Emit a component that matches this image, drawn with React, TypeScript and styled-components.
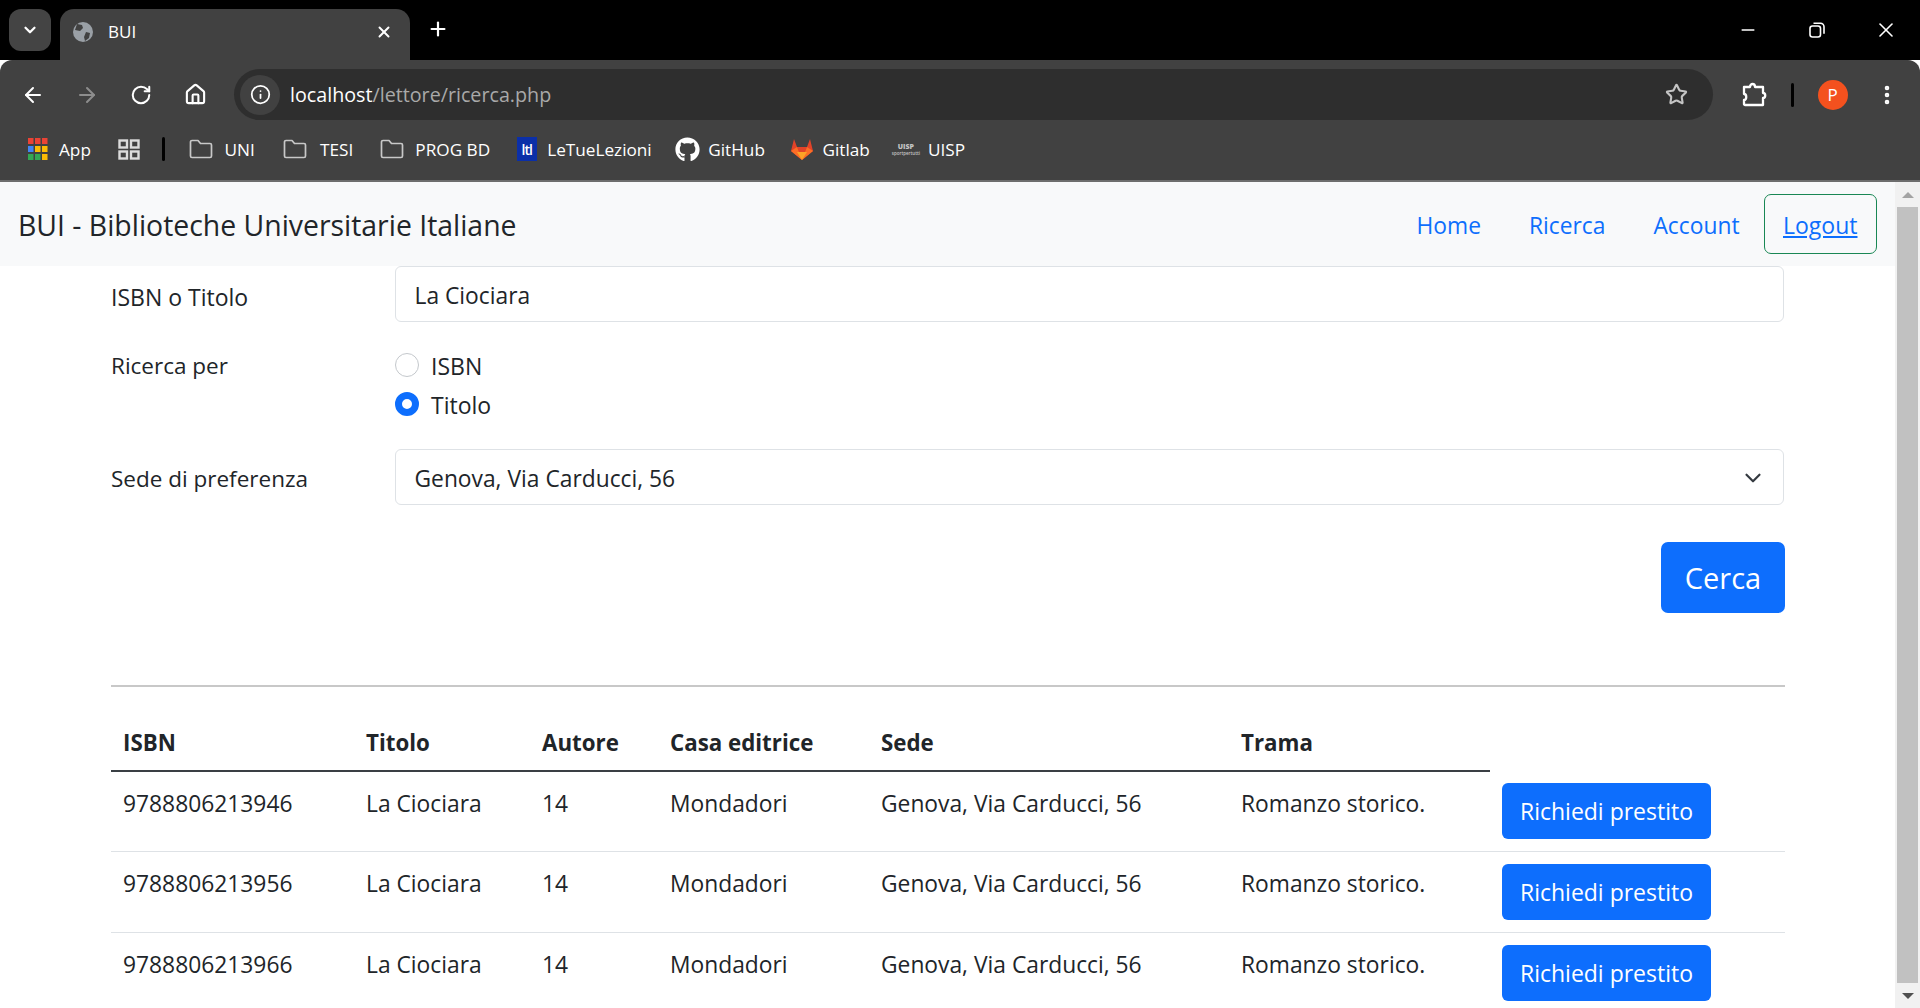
import React from "react";
import styled, { createGlobalStyle } from "styled-components";
import { ArrowLeft, ArrowRight, RotateCw, Home as HomeIcon, Info, Star, MoreVertical, X, Plus, ChevronDown, Minus } from "lucide-react";
import { FaGithub } from "react-icons/fa";

const Global = createGlobalStyle`
  html, body { margin: 0; padding: 0; height: 1008px; overflow: hidden; background: #fff; }
  * { box-sizing: border-box; }
  body { font-family: "Open Sans", "Noto Sans", sans-serif; color: #212529; }
`;

const Shell = styled.div`width: 1920px; height: 1008px; display: flex; flex-direction: column; overflow: hidden;`;

/* ---------- browser chrome ---------- */
const TabStrip = styled.div`height: 60px; background: #000; display: flex; align-items: flex-start; padding: 9px 0 0 9px; flex: none;`;
const TabMenu = styled.div`width: 42px; height: 42px; border-radius: 12px; background: #444; color: #fff; display: flex; align-items: center; justify-content: center;`;
const Tab = styled.div`width: 350px; height: 51px; margin-left: 9px; background: #414141; border-radius: 14px 14px 0 0; display: flex; align-items: center; padding: 0 17px 6px 12px; color: #fff; font-size: 17px;`;
const TabTitle = styled.span`margin-left: 14px; flex: 1;`;
const NewTab = styled.div`margin: 9px 0 0 17px; color: #fff; display: flex;`;
const WindowButtons = styled.div`margin-left: auto; display: flex; align-items: center; height: 42px;`;
const WindowButton = styled.div<{ $w: number }>`width: ${p => p.$w}px; height: 42px; color: #fff; display: flex; align-items: center; justify-content: center;`;

const Toolbar = styled.div`height: 60px; background: #414141; border-radius: 12px 12px 0 0; display: flex; align-items: center; padding: 9px 0 0 1px; flex: none;`;
const NavIcon = styled.div<{ $w: number; $dim?: boolean; $ml?: number }>`width: ${p => p.$w}px; margin-left: ${p => p.$ml ?? 0}px; color: ${p => (p.$dim ? "#8d8d8d" : "#fff")}; display: flex; justify-content: center; flex: none;`;
const Omnibox = styled.div`margin-left: 17px; width: 1478.5px; height: 51px; border-radius: 26px; background: #2e2e2e; display: flex; align-items: center; padding: 0 25px 0 6px; flex: none;`;
const InfoChip = styled.div`width: 40px; height: 40px; border-radius: 50%; background: #414141; color: #fff; display: flex; align-items: center; justify-content: center;`;
const Url = styled.div`margin-left: 10px; font-size: 19.7px; color: #a9a9a9; flex: 1;`;
const UrlHost = styled.span`color: #fff;`;
const ToolbarDivider = styled.div`width: 3px; height: 24px; background: #000; border-radius: 2px; margin: 0 22px 0 16px; flex: none;`;
const Avatar = styled.div`width: 30px; height: 30px; border-radius: 50%; background: #f4511e; color: #fff; font-size: 17px; display: flex; align-items: center; justify-content: center; flex: none; margin-left: 2px;`;

const Bookmarks = styled.div`height: 62px; background: #414141; display: flex; align-items: center; padding: 0 0 2px 28px; flex: none; color: #fff; font-size: 17.2px; border-bottom: 2px solid #6d6d6d;`;
const Bookmark = styled.div<{ $gap?: number; $ml?: number }>`display: flex; align-items: center; gap: ${p => p.$gap ?? 11}px; margin-left: ${p => p.$ml ?? 0}px; flex: none;`;
const BookmarkDivider = styled.div`width: 3px; height: 24px; background: #000; border-radius: 2px; margin-left: 22px; flex: none;`;
const LtlIcon = styled.div`width: 20px; height: 24px; background: #0b2fa8; color: #fff; font-size: 14px; font-weight: 600; display: flex; align-items: center; justify-content: center; letter-spacing: -1px;`;
const UispIcon = styled.div`width: 24px; color: #c4c4c4; font-size: 7px; font-weight: 800; line-height: 7px; text-align: center; display: flex; flex-direction: column; align-items: center;`;
const UispTag = styled.span`font-size: 4.5px; font-weight: 600; line-height: 6px; white-space: nowrap;`;

/* ---------- page ---------- */
const Viewport = styled.div`flex: 1; display: flex; min-height: 0;`;
const Page = styled.div`flex: 1; min-width: 0; overflow: hidden; background: #fff;`;
const Scrollbar = styled.div`width: 25px; flex: none; background: #f1f1f1; display: flex; flex-direction: column; align-items: center;`;
const ScrollArrow = styled.div<{ $down?: boolean }>`height: 25px; flex: none; display: flex; align-items: center; justify-content: center;
  &::before { content: ""; border-left: 6px solid transparent; border-right: 6px solid transparent; ${p => (p.$down ? "border-top: 6px solid #505050;" : "border-bottom: 6px solid #a3a3a3;")} }`;
const ScrollThumb = styled.div`width: 21px; flex: 1; background: #c1c1c1;`;

const Navbar = styled.nav`height: 84px; background: #f8f9fa; display: flex; align-items: center; padding: 2px 18px 0;`;
const Brand = styled.div`font-size: 28.4px; color: #212529;`;
const NavLinks = styled.div`margin-left: auto; display: flex; align-items: center; margin-top: -2px;`;
const NavLink = styled.a`font-size: 22.8px; color: #0d6efd; padding: 3px 24px 0;`;
const LogoutLink = styled.a`font-size: 23px; color: #0d6efd; text-decoration: underline; border: 1.5px solid #198754; border-radius: 7px; height: 60px; padding: 2px 18.5px 0; display: flex; align-items: center;`;

const Form = styled.div`padding: 0 110px 0 111px;`;
const Row = styled.div<{ $mt?: number }>`display: grid; grid-template-columns: 284px 1fr; padding-right: 1px; margin-top: ${p => p.$mt ?? 0}px;`;
const Label = styled.div<{ $pt: number; $size?: number }>`font-size: ${p => p.$size ?? 22.5}px; padding-top: ${p => p.$pt}px; line-height: 34px;`;
const Control = styled.div`height: 56px; border: 1.5px solid #dee2e6; border-radius: 6px; padding: 2px 17px 0 18.5px; font-size: 22.8px; display: flex; align-items: center; justify-content: space-between; background: #fff;`;
const RadioGroup = styled.div`display: flex; flex-direction: column; gap: 5px;`;
const RadioRow = styled.div`display: flex; align-items: center; gap: 12px; font-size: 23px; height: 34px;`;
const RadioText = styled.span`padding-top: 2px;`;
const Radio = styled.span<{ $on?: boolean }>`width: 24px; height: 24px; border-radius: 50%; flex: none; ${p => (p.$on ? "background: #fff; border: 7px solid #0d6efd;" : "border: 1.5px solid #c4c8cc; background: #fff;")}`;
const Actions = styled.div`display: flex; justify-content: flex-end; margin-top: 37px;`;
const SearchButton = styled.button`width: 124px; height: 71px; border: 0; border-radius: 7px; background: #0d6efd; color: #fff; font: inherit; font-size: 29px;`;
const Rule = styled.hr`margin: 72px 0 0; border: 0; border-top: 2px solid #c8c8c8;`;

const Table = styled.table`width: 100%; border-collapse: collapse; table-layout: fixed; margin-top: 10.5px; font-size: 22.8px;`;
const HeadCell = styled.th<{ $plain?: boolean }>`text-align: left; height: 73px; padding: 0 12px 12px; vertical-align: bottom; font-weight: 700; font-size: 22.3px; ${p => (p.$plain ? "" : "border-bottom: 2px solid #3a3f44;")}`;
const BodyRow = styled.tr`height: 81px; border-bottom: 1px solid #dee2e6;`;
const Cell = styled.td`padding: 15px 12px 0; vertical-align: top; line-height: 34px;`;
const ActionCell = styled.td`padding: 12px 12px 0; vertical-align: top;`;
const RequestButton = styled.button`width: 209px; height: 56px; border: 0; border-radius: 6px; background: #0d6efd; color: #fff; font: inherit; font-size: 23px; display: block; padding: 0;`;
const Col = styled.col<{ $w: number }>`width: ${p => p.$w}px;`;

const columns = [243, 176, 128, 211, 360, 261, 295];
const rows = ["9788806213946", "9788806213956", "9788806213966"];

const Globe = () => (
  <svg width="22" height="22" viewBox="0 0 22 22"><circle cx="11" cy="11" r="10" fill="#9aa0a6" /><path d="M5 3l5 1 1 3-3 3-5-1zM14 11l4 1-1 5-4 3-1-4z" fill="#414141" /></svg>
);
const AppsGrid = () => (
  <svg width="20" height="22" viewBox="0 0 20 22">
    {["#ea4335", "#ea4335", "#ea4335", "#4285f4", "#fbbc04", "#fbbc04", "#34a853", "#34a853", "#fbbc04"].map((c, i) => (
      <rect key={i} x={(i % 3) * 7} y={Math.floor(i / 3) * 8} width="5.5" height="6" fill={c} />
    ))}
  </svg>
);
const TileIcon = () => (
  <svg width="22" height="21" viewBox="0 0 22 21" fill="none" stroke="#dcdcdc" strokeWidth="2.4"><rect x="1.5" y="1.5" width="7.5" height="7" /><rect x="13" y="1.5" width="7.5" height="7" /><rect x="1.5" y="12.5" width="7.5" height="7" /><rect x="13" y="12.5" width="7.5" height="7" /></svg>
);
const Puzzle = () => (
  <svg width="26" height="26" viewBox="0 0 26 26" fill="none" stroke="#fff" strokeWidth="2.3" strokeLinejoin="round"><path d="M3 5h6c0-4 5-4 5 0h8v6c3 0 3 5 0 5v7H4c-1 0-1-1-1-1v-4c3 0 3-6 0-6z" /></svg>
);
const Restore = () => (
  <svg width="16" height="16" viewBox="0 0 16 16" fill="none" stroke="#fff" strokeWidth="1.6"><rect x="1" y="4" width="10.5" height="11" rx="2.5" /><path d="M4.5 1.2h7a3.5 3.5 0 0 1 3.5 3.5v7" /></svg>
);
const GitlabLogo = () => (
  <svg width="24" height="24" viewBox="0 0 24 24"><path d="M12 23L1 14l3-12 3 8h10l3-8 3 12z" fill="#e24329" /><path d="M12 23L1 14l6-4z" fill="#fc6d26" /><path d="M12 23l11-9-6-4z" fill="#fc6d26" /><path d="M12 23l-5-8h10z" fill="#fca326" /></svg>
);
const FolderIcon = () => (
  <svg width="24" height="20" viewBox="0 0 24 20" fill="none" stroke="#c8c8c8" strokeWidth="1.7" strokeLinejoin="round"><path d="M1.5 3a1.5 1.5 0 0 1 1.5-1.5h6l2.5 3H21a1.5 1.5 0 0 1 1.5 1.5v11a1.5 1.5 0 0 1-1.5 1.5H3A1.5 1.5 0 0 1 1.5 17z" /></svg>
);

export default function App() {
  return (
    <Shell>
      <Global />
      <TabStrip>
        <TabMenu><ChevronDown size={18} strokeWidth={3} /></TabMenu>
        <Tab>
          <Globe />
          <TabTitle>BUI</TabTitle>
          <X size={18} strokeWidth={2.6} />
        </Tab>
        <NewTab><Plus size={22} strokeWidth={2.4} /></NewTab>
        <WindowButtons>
          <WindowButton $w={68}><Minus size={20} strokeWidth={1.8} /></WindowButton>
          <WindowButton $w={70}><Restore /></WindowButton>
          <WindowButton $w={68}><X size={24} strokeWidth={1.6} /></WindowButton>
        </WindowButtons>
      </TabStrip>
      <Toolbar>
        <NavIcon $w={64}><ArrowLeft size={24} strokeWidth={2} /></NavIcon>
        <NavIcon $w={44} $dim><ArrowRight size={24} strokeWidth={2} /></NavIcon>
        <NavIcon $w={64}><RotateCw size={22} strokeWidth={2.2} /></NavIcon>
        <NavIcon $w={44}><HomeIcon size={23} strokeWidth={2.2} /></NavIcon>
        <Omnibox>
          <InfoChip><Info size={21} strokeWidth={2} /></InfoChip>
          <Url><UrlHost>localhost</UrlHost>/lettore/ricerca.php</Url>
          <Star size={23} strokeWidth={2.2} color="#c4c4c4" />
        </Omnibox>
        <NavIcon $w={42} $ml={20}><Puzzle /></NavIcon>
        <ToolbarDivider />
        <Avatar>P</Avatar>
        <NavIcon $w={78}><MoreVertical size={24} strokeWidth={2.6} /></NavIcon>
      </Toolbar>
      <Bookmarks>
        <Bookmark><AppsGrid /><span>App</span></Bookmark>
        <Bookmark $ml={27}><TileIcon /></Bookmark>
        <BookmarkDivider />
        <Bookmark $ml={24.5}><FolderIcon /><span>UNI</span></Bookmark>
        <Bookmark $ml={28} $gap={13.4}><FolderIcon /><span>TESI</span></Bookmark>
        <Bookmark $ml={27}><FolderIcon /><span>PROG BD</span></Bookmark>
        <Bookmark $ml={26.5} $gap={10.5}><LtlIcon>ltl</LtlIcon><span>LeTueLezioni</span></Bookmark>
        <Bookmark $ml={23.5} $gap={8}><FaGithub size={25} /><span>GitHub</span></Bookmark>
        <Bookmark $ml={25} $gap={8.6}><GitlabLogo /><span>Gitlab</span></Bookmark>
        <Bookmark $ml={24} $gap={10}><UispIcon>UISP<UispTag>sportpertutti</UispTag></UispIcon><span>UISP</span></Bookmark>
      </Bookmarks>
      <Viewport>
        <Page>
          <Navbar>
            <Brand>BUI - Biblioteche Universitarie Italiane</Brand>
            <NavLinks>
              <NavLink>Home</NavLink>
              <NavLink>Ricerca</NavLink>
              <NavLink>Account</NavLink>
              <LogoutLink>Logout</LogoutLink>
            </NavLinks>
          </Navbar>
          <Form>
            <Row>
              <Label $pt={14} $size={23}>ISBN o Titolo</Label>
              <Control>La Ciociara</Control>
            </Row>
            <Row $mt={26}>
              <Label $pt={1}>Ricerca per</Label>
              <RadioGroup>
                <RadioRow><Radio /><RadioText>ISBN</RadioText></RadioRow>
                <RadioRow><Radio $on /><RadioText>Titolo</RadioText></RadioRow>
              </RadioGroup>
            </Row>
            <Row $mt={28}>
              <Label $pt={13}>Sede di preferenza</Label>
              <Control>Genova, Via Carducci, 56<ChevronDown size={26} strokeWidth={2} color="#343a40" /></Control>
            </Row>
            <Actions><SearchButton>Cerca</SearchButton></Actions>
            <Rule />
            <Table>
              <colgroup>{columns.map((w, i) => <Col key={i} $w={w} />)}</colgroup>
              <thead>
                <tr>
                  {["ISBN", "Titolo", "Autore", "Casa editrice", "Sede", "Trama"].map(h => <HeadCell key={h}>{h}</HeadCell>)}
                  <HeadCell $plain />
                </tr>
              </thead>
              <tbody>
                {rows.map(isbn => (
                  <BodyRow key={isbn}>
                    <Cell>{isbn}</Cell>
                    <Cell>La Ciociara</Cell>
                    <Cell>14</Cell>
                    <Cell>Mondadori</Cell>
                    <Cell>Genova, Via Carducci, 56</Cell>
                    <Cell>Romanzo storico.</Cell>
                    <ActionCell><RequestButton>Richiedi prestito</RequestButton></ActionCell>
                  </BodyRow>
                ))}
              </tbody>
            </Table>
          </Form>
        </Page>
        <Scrollbar>
          <ScrollArrow />
          <ScrollThumb />
          <ScrollArrow $down />
        </Scrollbar>
      </Viewport>
    </Shell>
  );
}
